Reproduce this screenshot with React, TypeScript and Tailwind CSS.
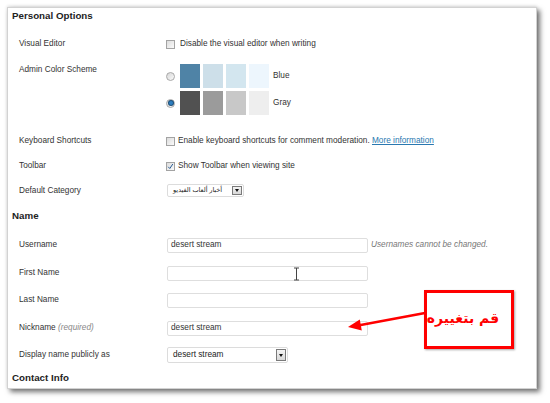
import React from 'react';

const FONT = "font-['Liberation_Sans','DejaVu_Sans',Arial,sans-serif]";

const Checkbox = ({ checked = false }: { checked?: boolean }) => (
  <span className="relative w-[9px] h-[9px] shrink-0 border border-[#a3a3a3] bg-gradient-to-br from-[#dcdcdc] to-[#fafafa] flex items-center justify-center">
    {checked && (
      <svg width="7" height="7" viewBox="0 0 7 7" className="absolute">
        <path d="M1.2 3.8 L2.8 5.5 L5.8 1" fill="none" stroke="#2a5d96" strokeWidth="1" />
      </svg>
    )}
  </span>
);

const Radio = ({ checked = false }: { checked?: boolean }) => (
  <span className="w-[9px] h-[9px] rounded-full border border-[#a8a8a8] bg-gradient-to-br from-[#d6d6d6] to-[#fbfbfb] flex items-center justify-center">
    {checked && <span className="w-[4px] h-[4px] rounded-full bg-[#2d7ec0] ring-1 ring-[#1b4e78]" />}
  </span>
);

const SelectBox = ({ value, width, height, small = false }: { value: string; width: string; height: string; small?: boolean }) => (
  <div className={`${width} ${height} border border-[#dcdcdc] bg-white rounded-[2px] flex items-center justify-between pl-[5px] pr-[1px]`}>
    <span className={small ? 'text-[6.5px] text-[#222]' : 'text-[8.25px] text-[#222]'}>{value}</span>
    <span className="w-[10px] h-[calc(100%-2px)] border border-[#7a7a7a] bg-gradient-to-b from-[#f4f4f4] to-[#d8d8d8] flex items-center justify-center">
      <span className="w-0 h-0 border-l-[2.5px] border-r-[2.5px] border-t-[3px] border-l-transparent border-r-transparent border-t-[#111]" />
    </span>
  </div>
);

const TextInput = ({ value = '' }: { value?: string }) => (
  <div className="w-[201px] h-[15px] border border-[#dedede] rounded-[2px] bg-white flex items-center pl-[3px] text-[8.25px] text-[#333]">
    {value}
  </div>
);

const Label = ({ children }: { children: React.ReactNode }) => (
  <div className="w-[147px] shrink-0 text-[8.25px] text-[#333]">{children}</div>
);

const Row = ({ label, className, children }: { label: React.ReactNode; className: string; children?: React.ReactNode }) => (
  <div className={`h-[16px] flex items-center pl-[11px] ${className}`}>
    <Label>{label}</Label>
    {children}
  </div>
);

const Heading = ({ title, className }: { title: string; className: string }) => (
  <div className={`h-[16px] flex items-center pl-[4px] text-[9.75px] font-bold text-[#222] ${className}`}>{title}</div>
);

const schemes = [
  { name: 'Blue', colors: ['bg-[#4f83a6]', 'bg-[#cddfe9]', 'bg-[#d3e6ef]', 'bg-[#edf6fd]'], checked: false },
  { name: 'Gray', colors: ['bg-[#515151]', 'bg-[#9b9b9b]', 'bg-[#c8c8c8]', 'bg-[#eeeeee]'], checked: true },
];

export default function App() {
  return (
    <div className={`w-[550px] h-[403px] bg-white pt-[7px] pl-[7px] relative overflow-hidden ${FONT}`}>
      <div className="w-[530px] h-[382px] bg-white border border-[#d2d2d2] shadow-[3px_3px_5px_rgba(0,0,0,0.55),0_-1px_3px_rgba(0,0,0,0.12)] flex flex-col">
        <Heading title="Personal Options" className="mt-0" />

        <Row label="Visual Editor" className="mt-[12px]">
          <div className="flex items-center gap-[5px] text-[8.25px] text-[#333]">
            <Checkbox />
            <span>Disable the visual editor when writing</span>
          </div>
        </Row>

        <div className="mt-[12px] h-[51px] flex pl-[11px]">
          <div className="w-[147px] shrink-0 text-[8.25px] text-[#333] leading-[12px]">Admin Color Scheme</div>
          <div className="flex flex-col gap-[3px]">
            {schemes.map((s) => (
              <div key={s.name} className="flex items-center h-[24px]">
                <span className="w-[14px] flex items-center">
                  <Radio checked={s.checked} />
                </span>
                <div className="flex gap-[3px]">
                  {s.colors.map((c) => (
                    <span key={c} className={`w-[20px] h-[24px] ${c}`} />
                  ))}
                </div>
                <span className="ml-[4px] text-[8.25px] text-[#333]">{s.name}</span>
              </div>
            ))}
          </div>
        </div>

        <Row label="Keyboard Shortcuts" className="mt-[18px]">
          <div className="flex items-center gap-[3px] text-[8.25px] text-[#333]">
            <Checkbox />
            <span>
              Enable keyboard shortcuts for comment moderation.{' '}
              <span className="text-[#2a78b0] underline">More information</span>
            </span>
          </div>
        </Row>

        <Row label="Toolbar" className="mt-[9px]">
          <div className="flex items-center gap-[3px] text-[8.25px] text-[#333]">
            <Checkbox checked />
            <span>Show Toolbar when viewing site</span>
          </div>
        </Row>

        <Row label="Default Category" className="mt-[9px]">
          <div className="pl-[1px] -mt-[2px]">
            <SelectBox value="أخبار ألعاب الفيديو" width="w-[77px]" height="h-[13px]" small />
          </div>
        </Row>

        <Heading title="Name" className="mt-[9px]" />

        <Row label="Username" className="mt-[13px]">
          <div className="pl-[1px] flex items-center gap-[3px]">
            <TextInput value="desert stream" />
            <span className="text-[8.25px] italic text-[#777]">Usernames cannot be changed.</span>
          </div>
        </Row>

        <Row label="First Name" className="mt-[12px]">
          <div className="pl-[1px]">
            <TextInput />
          </div>
        </Row>

        <Row label="Last Name" className="mt-[11px]">
          <div className="pl-[1px]">
            <TextInput />
          </div>
        </Row>

        <Row
          label={
            <>
              Nickname <span className="italic text-[#888]">(required)</span>
            </>
          }
          className="mt-[12px]"
        >
          <div className="pl-[1px]">
            <TextInput value="desert stream" />
          </div>
        </Row>

        <Row label="Display name publicly as" className="mt-[11px]">
          <div className="pl-[1px]">
            <SelectBox value="desert stream" width="w-[121px]" height="h-[16px]" />
          </div>
        </Row>

        <Heading title="Contact Info" className="mt-[7px]" />
      </div>

      {/* text cursor over the first name field */}
      <svg className="absolute left-[293px] top-[267px]" width="7" height="14" viewBox="0 0 7 14">
        <path d="M1 1 H6 M3.5 1 V13 M1 13 H6" stroke="#444" strokeWidth="1" fill="none" />
      </svg>

      {/* annotation arrow */}
      <svg className="absolute left-0 top-0" width="550" height="403" viewBox="0 0 550 403">
        <line x1="425" y1="313" x2="358" y2="325.5" stroke="#ff0000" strokeWidth="2.5" />
        <polygon points="348,327 359.8,319.4 361.8,330.6" fill="#ff0000" />
      </svg>

      <div className="absolute left-[424px] top-[290px] w-[90px] h-[59px] border-[3px] border-[#ff0000] bg-white shadow-[1px_1px_2px_rgba(0,0,0,0.35)] flex items-center justify-center pr-[12px] pb-[3px]">
        <span dir="rtl" className="whitespace-nowrap font-['DejaVu_Sans',sans-serif] font-bold text-[14px] text-[#ff0000]">
          قم بتغييره
        </span>
      </div>
    </div>
  );
}
